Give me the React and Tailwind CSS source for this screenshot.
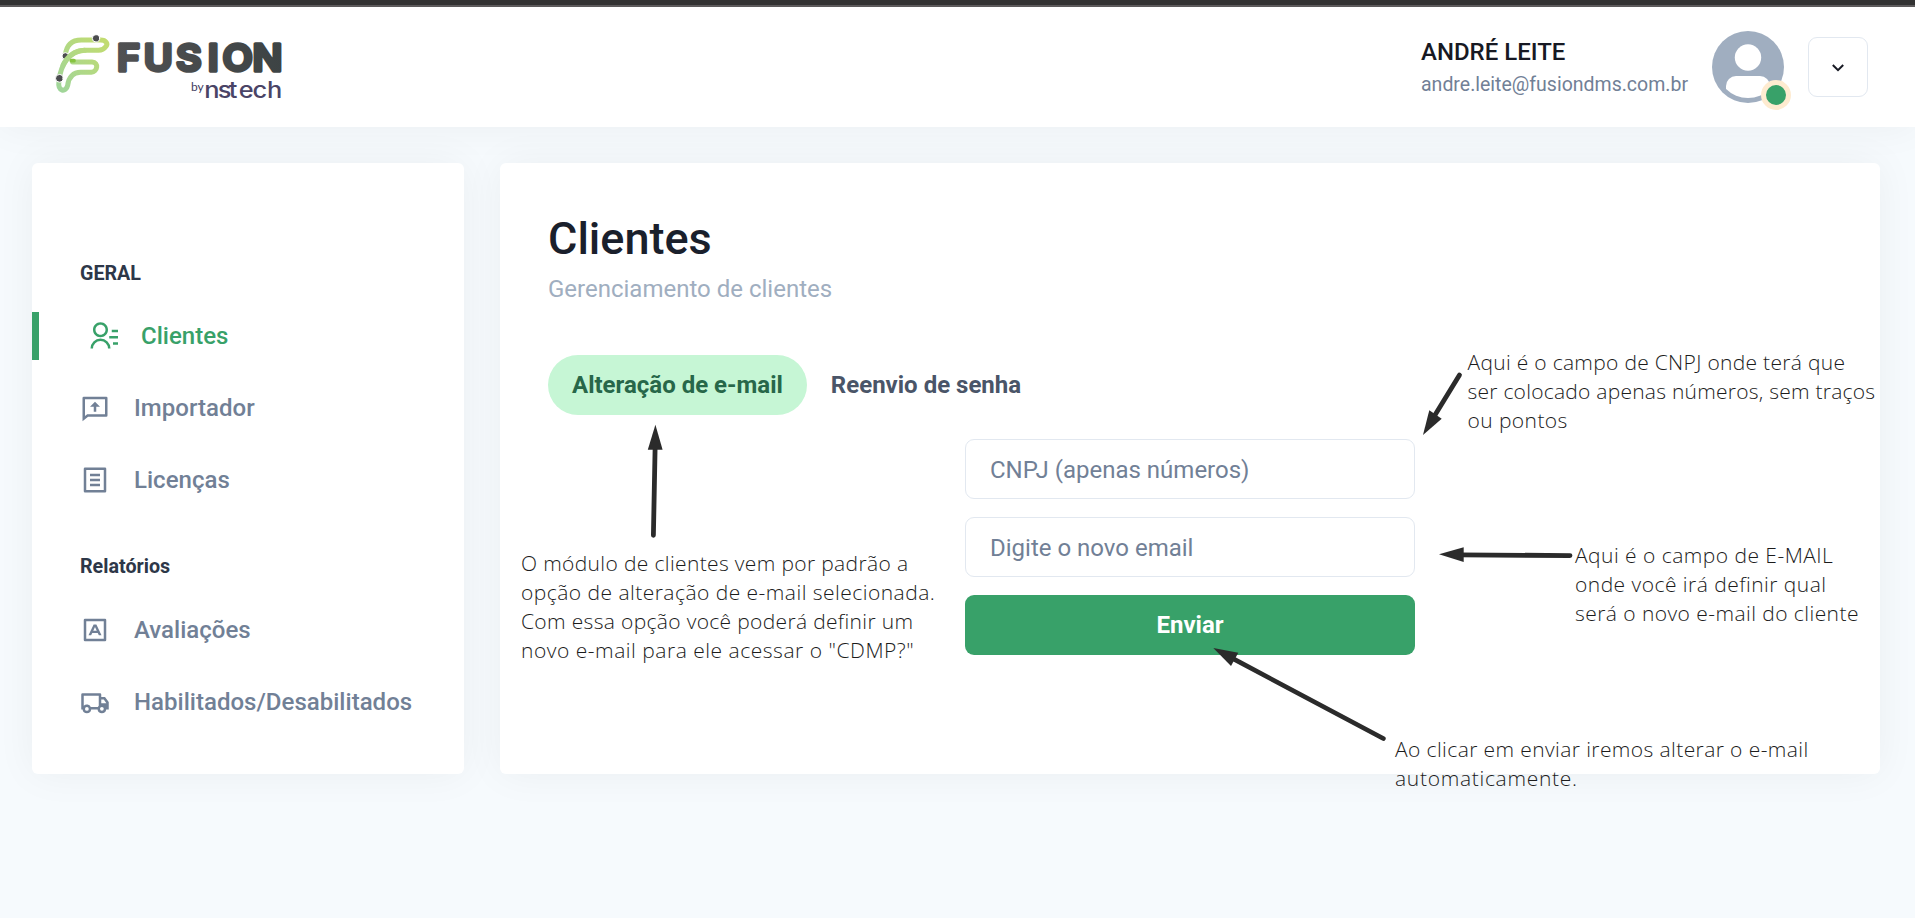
import React from "react";

const ICONS = {
  contacts:
    "M19 7h5v2h-5V7zm-2 5h7v2h-7v-2zm3 5h4v2h-4v-2zM2 22a8 8 0 1 1 16 0h-2a6 6 0 1 0-12 0H2zm8-9c-3.315 0-6-2.685-6-6s2.685-6 6-6 6 2.685 6 6-2.685 6-6 6zm0-2c2.21 0 4-1.79 4-4s-1.79-4-4-4-4 1.79-4 4 1.79 4 4 4z",
  upload:
    "M6.455 19L2 22.5V4a1 1 0 0 1 1-1h18a1 1 0 0 1 1 1v14a1 1 0 0 1-1 1H6.455zm-.692-2H20V5H4v13.385L5.763 17zM13 11v4h-2v-4H8l4-4 4 4h-3z",
  article:
    "M20 22H4a1 1 0 0 1-1-1V3a1 1 0 0 1 1-1h16a1 1 0 0 1 1 1v18a1 1 0 0 1-1 1zm-1-2V4H5v16h14zM8 7h8v2H8V7zm0 4h8v2H8v-2zm0 4h8v2H8v-2z",
  character:
    "M5 5v14h14V5H5zM4 3h16a1 1 0 0 1 1 1v16a1 1 0 0 1-1 1H4a1 1 0 0 1-1-1V4a1 1 0 0 1 1-1zm4.9 13.2H6.8l4.1-8.7h2.2l4.1 8.7h-2.1l-.9-1.9H9.8l-.9 1.9zm1.7-3.7h2.8L12 9.6l-1.4 2.9z",
  truck:
    "M8.965 18a3.5 3.5 0 0 1-6.93 0H1V6a1 1 0 0 1 1-1h14a1 1 0 0 1 1 1v2h3l3 4.056V18h-2.035a3.5 3.5 0 0 1-6.93 0h-5.07zM15 7H3v8.05a3.5 3.5 0 0 1 5.663.95h5.674c.168-.353.393-.674.663-.95V7zm2 6h4v-.285L18.992 10H17v3zm.5 6a1.5 1.5 0 1 0 0-3.001 1.5 1.5 0 0 0 0 3.001zM7 17.5a1.5 1.5 0 1 0-3 0 1.5 1.5 0 0 0 3 0z",
};

function Icon({ name }) {
  return (
    <svg viewBox="0 0 24 24" className="size-[30px] shrink-0 fill-current">
      <path d={ICONS[name]} fillRule="evenodd" />
    </svg>
  );
}

function Logo() {
  return (
    <svg viewBox="50 27 240 76" className="h-[76px] w-[240px]" aria-label="Fusion by nstech">
      <defs>
        <linearGradient id="leaf" gradientUnits="userSpaceOnUse" x1="20" y1="180" x2="175" y2="30">
          <stop offset="0" stopColor="#9fd59b" />
          <stop offset="1" stopColor="#c3dc6e" />
        </linearGradient>
        <linearGradient id="ink" gradientUnits="userSpaceOnUse" x1="0" y1="0" x2="157" y2="0">
          <stop offset="0" stopColor="#505153" />
          <stop offset="1" stopColor="#3d4344" />
        </linearGradient>
      </defs>
      <g transform="translate(50 30) scale(.3333)" fill="none" stroke="url(#leaf)" strokeWidth="15" strokeLinecap="round" strokeLinejoin="round">
        <path d="M46 76C49 46 66 30 94 30H151C170 30 174 42 168 49C163 56 156 61 146 61H104C58 63 32 104 27 152C22 186 48 188 53 166C56 141 70 127 92 127H124C142 126 148 97 126 96H68" />
        <path d="M64 92H72" stroke="#86c440" strokeWidth="11" />
        <g stroke="#fff" strokeWidth="3" fill="#4b4c4f">
          <circle cx="138" cy="25" r="11" />
          <circle cx="46" cy="78" r="10" />
          <circle cx="28" cy="145" r="11.5" />
        </g>
        <path d="M104 61C74 62 50 80 39 106" />
      </g>
      <g transform="translate(118 70.7) scale(1.05 1)">
        <text x="-1 24.5 55.3 85.5 99.5 128.2" y="0" fontFamily="Inter, sans-serif" fontWeight="600" fontSize="37.5" fill="url(#ink)" stroke="url(#ink)" strokeWidth="3.5" strokeLinejoin="round">
          FUSION
        </text>
      </g>
      <text x="191" y="91.3" fontFamily="Lato, sans-serif" fontSize="12" fill="#423c5e">
        by
      </text>
      <g transform="translate(206 98.3) scale(1.13 1)">
        <text x="-1.6 10.3 20.1 28.9 41.2 54" y="0" fontFamily="Inter, sans-serif" fontWeight="550" fontSize="22.5" fill="#4a4466">
          nstech
        </text>
      </g>
    </svg>
  );
}

function Avatar() {
  return (
    <div className="relative size-[72px]">
      <svg viewBox="0 0 72 72" className="size-[72px]">
        <defs>
          <clipPath id="torso">
            <circle cx="36" cy="36" r="31" />
          </clipPath>
        </defs>
        <circle cx="36" cy="36" r="36" fill="#a0aec0" />
        <circle cx="36" cy="26.5" r="13.2" fill="#fff" />
        <rect x="14" y="45" width="44" height="30" rx="10" fill="#fff" clipPath="url(#torso)" />
      </svg>
      <span className="absolute -right-[7px] -bottom-[7px] size-[30px] rounded-full border-[5px] border-[#feebd0] bg-[#38a169]" />
    </div>
  );
}

function Header() {
  return (
    <header className="flex h-[120px] items-center justify-between bg-white pr-[47px] pb-1 pl-[50px] shadow-[0_0_40px_rgba(0,0,0,0.05)]">
      <Logo />
      <div className="flex items-center pt-1">
        <div className="mr-6 flex flex-col pt-[3px]">
          <span className="text-[24px] leading-8 font-medium text-[#171923]">ANDRÉ LEITE</span>
          <span className="pt-px text-[19.5px] leading-8 text-[#718096]">andre.leite@fusiondms.com.br</span>
        </div>
        <Avatar />
        <button className="ml-6 flex size-[60px] items-center justify-center rounded-[9px] border border-[#e2e8f0] text-[#171923]">
          <svg viewBox="0 0 12 8" className="mt-0.5 h-2 w-3 fill-none stroke-current stroke-2">
            <path d="M.8 1L6 6.2L11.2 1" />
          </svg>
        </button>
      </div>
    </header>
  );
}

function MenuItem({ icon, label, active }) {
  return (
    <li className={active ? "flex h-12 items-center gap-[23px] border-l-[7px] border-[#38a169] pl-[49px] text-[#38a169]" : "flex h-12 items-center gap-6 pl-12 text-[#718096]"}>
      <Icon name={icon} />
      <a className="text-[24px] leading-none font-medium tracking-[0.02px]">{label}</a>
    </li>
  );
}

function MenuGroup({ title, className, children }) {
  return (
    <section className={`flex flex-col ${className}`}>
      <h3 className="pl-12 text-[19.7px] leading-[30px] font-bold text-[#2d3748]">{title}</h3>
      <ul className="flex flex-col gap-6">{children}</ul>
    </section>
  );
}

function Sidebar() {
  return (
    <aside className="flex w-[432px] shrink-0 flex-col gap-12 rounded-md bg-white pt-24 pb-12 shadow-[0_0_40px_rgba(0,0,0,0.05)]">
      <MenuGroup title="GERAL" className="gap-[23px]">
        <MenuItem icon="contacts" label="Clientes" active />
        <MenuItem icon="upload" label="Importador" />
        <MenuItem icon="article" label="Licenças" />
      </MenuGroup>
      <MenuGroup title="Relatórios" className="gap-6">
        <MenuItem icon="character" label="Avaliações" />
        <MenuItem icon="truck" label="Habilitados/Desabilitados" />
      </MenuGroup>
    </aside>
  );
}

function Content() {
  return (
    <main className="flex-1 rounded-md bg-white px-12 pt-[49px] shadow-[0_0_40px_rgba(0,0,0,0.05)]">
      <h1 className="text-[45px] leading-[54px] font-medium text-[#1a202c]">Clientes</h1>
      <p className="mt-[5px] text-[24px] leading-9 text-[#a0aec0]">Gerenciamento de clientes</p>
      <div className="mt-12 flex text-[24px] font-bold">
        <button className="h-[60px] rounded-full bg-[#c6f6d5] px-6 text-[#276749]">Alteração de e-mail</button>
        <button className="h-[60px] rounded-full px-6 text-[#4a5568]">Reenvio de senha</button>
      </div>
      <form className="mx-auto mt-6 flex w-[450px] flex-col gap-[18px] text-[24px]">
        <input placeholder="CNPJ (apenas números)" className="h-[60px] rounded-[9px] border border-[#e2e8f0] px-6 pt-0.5 placeholder:text-[#718096]" />
        <input placeholder="Digite o novo email" className="h-[60px] rounded-[9px] border border-[#e2e8f0] px-6 pt-0.5 placeholder:text-[#718096]" />
        <button type="button" className="h-[60px] rounded-[9px] bg-[#38a169] font-bold text-white">
          Enviar
        </button>
      </form>
    </main>
  );
}

function Note({ className, children }) {
  return <p className={`absolute flex flex-col font-['Open_Sans',sans-serif] text-[21px] leading-[29px] font-[340] whitespace-nowrap text-[#1c1c1c] ${className}`}>{children}</p>;
}

function Arrow({ from, to, head }) {
  return (
    <g>
      <path d={`M${from}L${to}`} stroke="#2b2b2b" strokeWidth="4.8" strokeLinecap="round" />
      <path d={head} fill="#2b2b2b" />
    </g>
  );
}

function Annotations() {
  return (
    <>
      <svg viewBox="0 0 1915 918" className="pointer-events-none absolute top-0 left-0 h-[918px] w-[1915px]">
        <Arrow from="653.4 535.3" to="655.1 448" head="M655.4 424.7L647.8 449.7H662.6Z" />
        <Arrow from="1459.5 375" to="1435 415" head="M1423 435L1429.3 410.3L1441.7 418.7Z" />
        <Arrow from="1570 555.6" to="1460 554.8" head="M1439 554.3L1463.7 547.3V562Z" />
        <Arrow from="1383.3 738.5" to="1233 658.7" head="M1213.3 648L1238.3 652.7L1231 666Z" />
      </svg>
      <Note className="top-[549px] left-[521px]">
        <span className="tracking-[0.35px]">O módulo de clientes vem por padrão a</span>
        <span className="tracking-[0.47px]">opção de alteração de e-mail selecionada.</span>
        <span className="tracking-[0.33px]">Com essa opção você poderá definir um</span>
        <span className="tracking-[0.52px]">novo e-mail para ele acessar o "CDMP?"</span>
      </Note>
      <Note className="top-[348px] left-[1467.5px]">
        <span className="tracking-[0.3px]">Aqui é o campo de CNPJ onde terá que</span>
        <span className="tracking-[0.24px]">ser colocado apenas números, sem traços</span>
        <span className="tracking-[0.42px]">ou pontos</span>
      </Note>
      <Note className="top-[541px] left-[1575px]">
        <span className="tracking-[0.47px]">Aqui é o campo de E-MAIL</span>
        <span className="tracking-[0.47px]">onde você irá definir qual</span>
        <span className="tracking-[0.44px]">será o novo e-mail do cliente</span>
      </Note>
      <Note className="top-[735px] left-[1395px]">
        <span className="tracking-[0.4px]">Ao clicar em enviar iremos alterar o e-mail</span>
        <span className="tracking-[0.7px]">automaticamente.</span>
      </Note>
    </>
  );
}

export default function App() {
  return (
    <div className="relative flex h-[918px] w-[1915px] flex-col overflow-hidden bg-[#f6fafd] font-[Roboto,sans-serif]">
      <div className="h-[7px] shrink-0 border-b-2 border-[#5f5d5e] bg-[#333333]" />
      <Header />
      <div className="flex h-[647px] gap-9 pt-9 pr-[35px] pl-8">
        <Sidebar />
        <Content />
      </div>
      <Annotations />
    </div>
  );
}
